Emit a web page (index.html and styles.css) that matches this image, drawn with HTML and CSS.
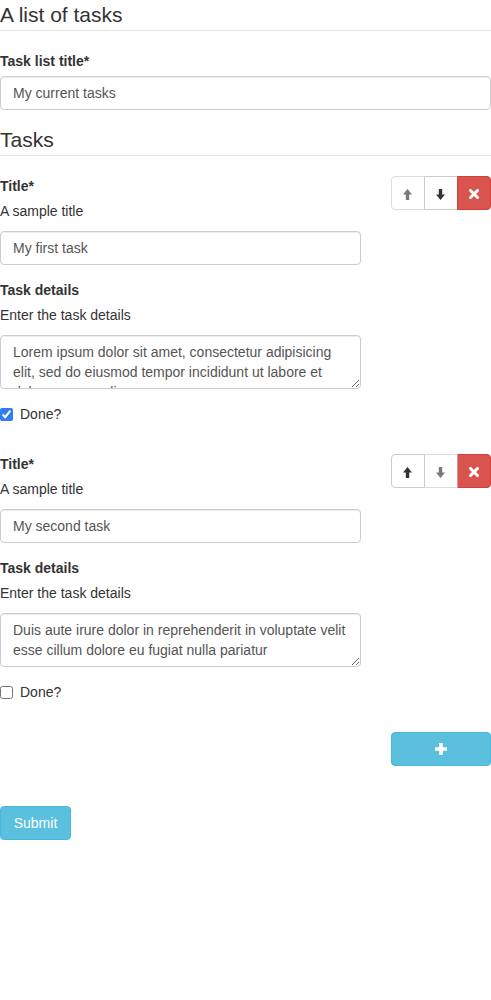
FILE: index.html
```html
<!DOCTYPE html>
<html lang="en">
<head>
<meta charset="utf-8">
<title>A list of tasks</title>
<link rel="stylesheet" href="styles.css">
</head>
<body>
<form class="form">
  <h2 class="legend">A list of tasks</h2>
  <div class="form-group">
    <label class="control-label">Task list title*</label>
    <input class="form-control" type="text" value="My current tasks">
  </div>
  <div class="form-group">
    <h2 class="legend">Tasks</h2>
    <div class="array-items">
      <div class="array-item">
        <div class="item-main">
          <div class="form-group">
            <label class="control-label">Title*</label>
            <p class="field-description">A sample title</p>
            <input class="form-control" type="text" value="My first task">
          </div>
          <div class="form-group">
            <label class="control-label">Task details</label>
            <p class="field-description">Enter the task details</p>
            <textarea class="form-control textarea">Lorem ipsum dolor sit amet, consectetur adipisicing elit, sed do eiusmod tempor incididunt ut labore et dolore magna aliqua.</textarea>
          </div>
          <div class="form-group">
            <label class="checkbox"><input type="checkbox" checked><span>Done?</span></label>
          </div>
        </div>
        <div class="toolbox">
          <button type="button" class="btn btn-default btn-first" disabled>
            <svg class="ico-arrow" viewBox="0 0 9 11" width="9" height="11"><polygon points="4.5,0 9,5.5 6.2,5.5 6.2,11 2.8,11 2.8,5.5 0,5.5" fill="currentColor"/></svg>
          </button>
          <button type="button" class="btn btn-default btn-mid">
            <svg class="ico-arrow" viewBox="0 0 9 11" width="9" height="11"><polygon points="4.5,11 9,5.5 6.2,5.5 6.2,0 2.8,0 2.8,5.5 0,5.5" fill="currentColor"/></svg>
          </button>
          <button type="button" class="btn btn-danger btn-last">
            <svg class="ico-x" viewBox="0 0 10 10" width="10" height="10"><path d="M1.5 1.5 L8.5 8.5 M8.5 1.5 L1.5 8.5" stroke="currentColor" stroke-width="3" stroke-linecap="square"/></svg>
          </button>
        </div>
      </div>
      <div class="array-item">
        <div class="item-main">
          <div class="form-group">
            <label class="control-label">Title*</label>
            <p class="field-description">A sample title</p>
            <input class="form-control" type="text" value="My second task">
          </div>
          <div class="form-group">
            <label class="control-label">Task details</label>
            <p class="field-description">Enter the task details</p>
            <textarea class="form-control textarea">Duis aute irure dolor in reprehenderit in voluptate velit esse cillum dolore eu fugiat nulla pariatur</textarea>
          </div>
          <div class="form-group">
            <label class="checkbox"><input type="checkbox"><span>Done?</span></label>
          </div>
        </div>
        <div class="toolbox">
          <button type="button" class="btn btn-default btn-first">
            <svg class="ico-arrow" viewBox="0 0 9 11" width="9" height="11"><polygon points="4.5,0 9,5.5 6.2,5.5 6.2,11 2.8,11 2.8,5.5 0,5.5" fill="currentColor"/></svg>
          </button>
          <button type="button" class="btn btn-default btn-mid" disabled>
            <svg class="ico-arrow" viewBox="0 0 9 11" width="9" height="11"><polygon points="4.5,11 9,5.5 6.2,5.5 6.2,0 2.8,0 2.8,5.5 0,5.5" fill="currentColor"/></svg>
          </button>
          <button type="button" class="btn btn-danger btn-last">
            <svg class="ico-x" viewBox="0 0 10 10" width="10" height="10"><path d="M1.5 1.5 L8.5 8.5 M8.5 1.5 L1.5 8.5" stroke="currentColor" stroke-width="3" stroke-linecap="square"/></svg>
          </button>
        </div>
      </div>
    </div>
    <div class="add-row">
      <button type="button" class="btn btn-info btn-add">
        <svg class="ico-plus" viewBox="0 0 12 12" width="12" height="12"><path d="M6 0 V12 M0 6 H12" stroke="currentColor" stroke-width="3.6"/></svg>
      </button>
    </div>
  </div>
  <div class="submit-row">
    <button type="submit" class="btn btn-info btn-submit">Submit</button>
  </div>
</form>
</body>
</html>
```

FILE: styles.css
```css
* { box-sizing: border-box; }

html, body {
  margin: 0;
  padding: 0;
  background: #fff;
}

body {
  font-family: "Liberation Sans", Arial, sans-serif;
  font-size: 14px;
  line-height: 20px;
  color: #333;
}

.form {
  display: block;
}

.legend {
  margin: 0 0 20px 0;
  padding: 0;
  font-size: 21px;
  font-weight: normal;
  line-height: 30px;
  height: 31px;
  color: #333;
  border-bottom: 1px solid #e5e5e5;
}

.form-group {
  margin-bottom: 15px;
}

.control-label {
  display: block;
  font-weight: bold;
  margin-bottom: 5px;
  line-height: 20px;
}

.field-description {
  margin: 0 0 10px 0;
  line-height: 20px;
}

.form-control {
  display: block;
  width: 100%;
  height: 34px;
  padding: 6px 12px;
  font-family: inherit;
  font-size: 14px;
  line-height: 20px;
  color: #555;
  background: #fff;
  border: 1px solid #ccc;
  border-radius: 4px;
  box-shadow: inset 0 1px 1px rgba(0, 0, 0, 0.075);
  margin: 0;
}

.textarea {
  height: 54px;
  resize: vertical;
  overflow: hidden;
}

.array-items {
  display: flex;
  flex-direction: column;
}

.array-item {
  display: grid;
  grid-template-columns: 1fr 100.25px;
  column-gap: 30px;
  align-items: start;
  margin-bottom: 15px;
}

.item-main {
  display: flow-root;
}

.checkbox {
  display: flex;
  align-items: center;
  gap: 7px;
  height: 20px;
  font-weight: normal;
  cursor: pointer;
}

.checkbox input {
  margin: 0;
  width: 13px;
  height: 13px;
  accent-color: #2f7cf6;
}

.toolbox {
  display: flex;
}

.btn {
  display: inline-flex;
  align-items: center;
  justify-content: center;
  height: 34px;
  padding: 6px 12px;
  font-family: inherit;
  font-size: 14px;
  line-height: 20px;
  border: 1px solid transparent;
  border-radius: 4px;
  cursor: pointer;
  margin: 0;
}

.btn-default {
  color: #333;
  background: #fff;
  border-color: #ccc;
}

.btn-danger {
  color: #fff;
  background: #d9534f;
  border-color: #d43f3a;
}

.btn-info {
  color: #fff;
  background: #5bc0de;
  border-color: #46b8da;
}

.btn[disabled] {
  opacity: 0.65;
  cursor: not-allowed;
}

.toolbox .btn {
  flex: 1 1 0%;
  padding-left: 6px;
  padding-right: 6px;
  font-weight: bold;
}

.btn-first {
  border-top-right-radius: 0;
  border-bottom-right-radius: 0;
}

.btn-mid {
  border-radius: 0;
  margin-left: -1px;
}

.btn-last {
  border-top-left-radius: 0;
  border-bottom-left-radius: 0;
  margin-left: -1px;
}

.ico-arrow {
  display: block;
  margin-top: 2px;
}

.ico-x {
  display: block;
  margin-top: 1px;
}

.add-row {
  display: flex;
  justify-content: flex-end;
  margin-bottom: 40px;
}

.btn-add {
  width: 100.25px;
}

.ico-plus {
  display: block;
}

.submit-row {
  display: flex;
}

.btn-submit {
  width: 71px;
}
```
